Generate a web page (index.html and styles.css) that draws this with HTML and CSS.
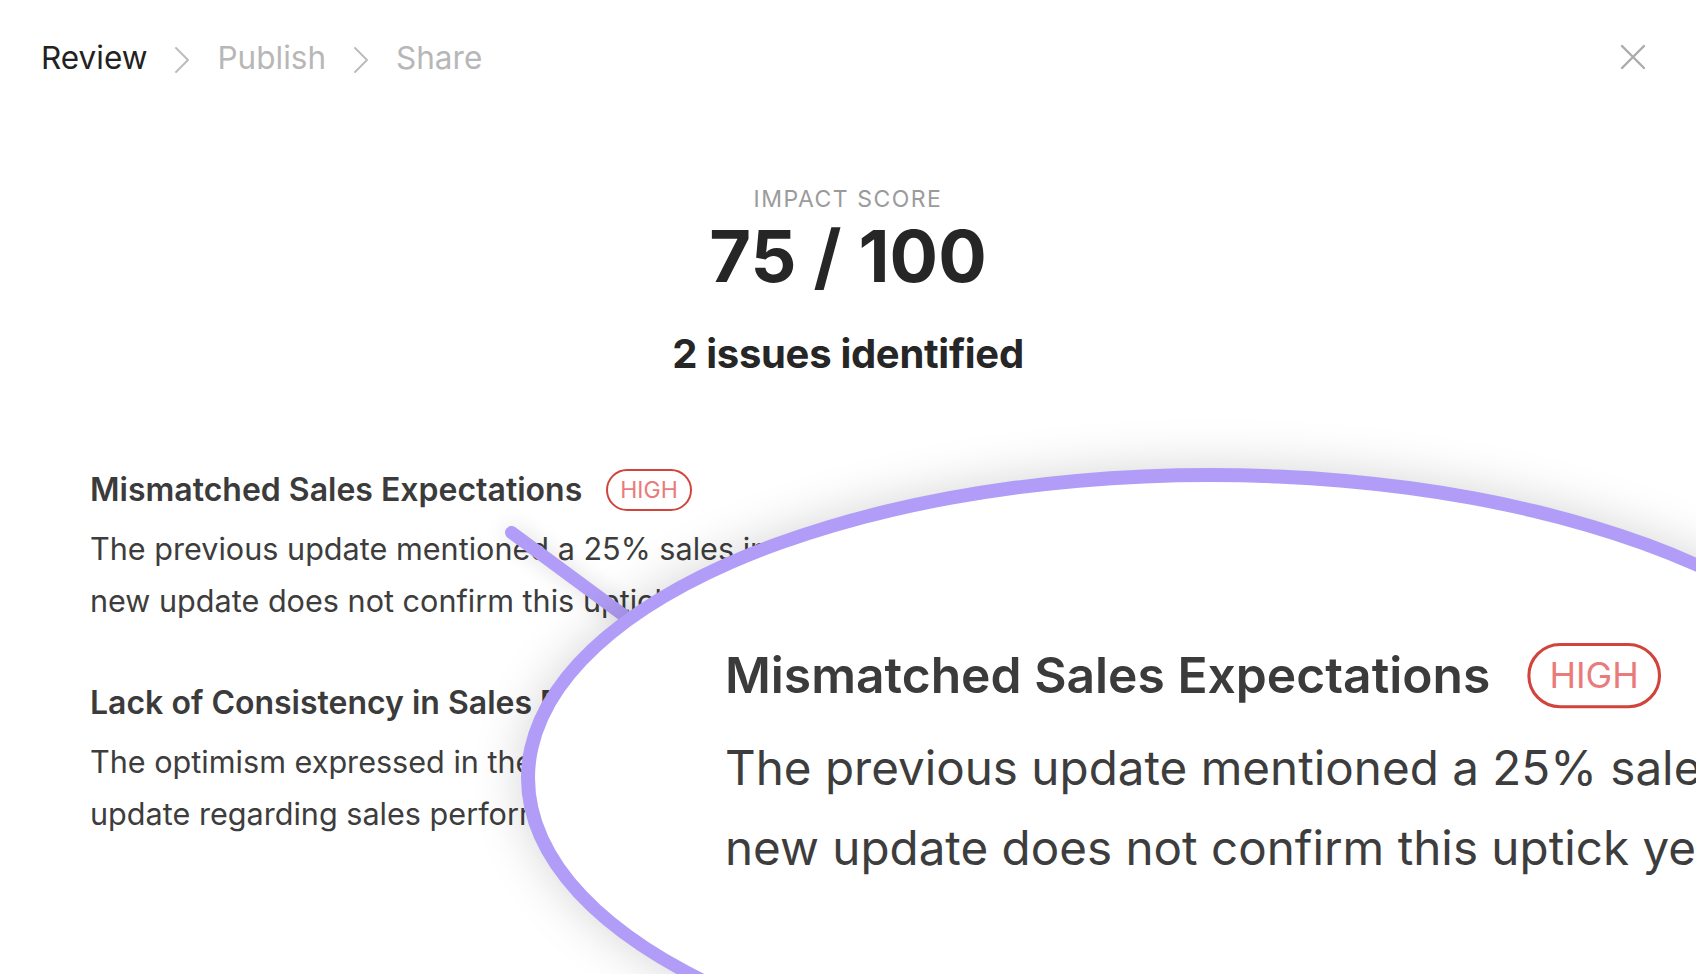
FILE: index.html
```html
<!DOCTYPE html>
<html lang="en">
<head>
    <meta charset="UTF-8">
    <title>Review</title>
    <link rel="stylesheet" href="styles.css">
</head>
<body>
    <div class="topbar">
        <div class="crumbs">
            <span class="crumb active">Review</span>
            <svg class="chev" width="16" height="28" viewBox="0 0 16 28"><polyline points="2,2 14,14 2,26" fill="none" stroke="#bcbcbc" stroke-width="2" stroke-linecap="round" stroke-linejoin="round"/></svg>
            <span class="crumb">Publish</span>
            <svg class="chev" width="16" height="28" viewBox="0 0 16 28"><polyline points="2,2 14,14 2,26" fill="none" stroke="#bcbcbc" stroke-width="2" stroke-linecap="round" stroke-linejoin="round"/></svg>
            <span class="crumb">Share</span>
        </div>
        <svg class="close" width="26" height="26" viewBox="0 0 26 26"><path d="M2 2L24 24M24 2L2 24" stroke="#ababab" stroke-width="2.4" stroke-linecap="round"/></svg>
    </div>

    <div class="score">
        <div class="score-label">IMPACT SCORE</div>
        <div class="score-value">75 / 100</div>
        <div class="issues-count">2 issues identified</div>
    </div>

    <div class="issues">
        <div class="issue">
            <div class="issue-title">Mismatched Sales Expectations <span class="badge">HIGH</span></div>
            <p>The previous update mentioned a 25% sales increase for this quarter, but the<br>new update does not confirm this uptick yet.</p>
        </div>
        <div class="issue">
            <div class="issue-title">Lack of Consistency in Sales Performance <span class="badge">HIGH</span></div>
            <p>The optimism expressed in the new update contrasts with the tone of the previous<br>update regarding sales performance in the last quarter.</p>
        </div>
    </div>

    <!-- magnifier -->
    <div class="handle"></div>
    <div class="lens">
        <div class="issues zoomed" aria-hidden="true">
            <div class="issue">
                <div class="issue-title">Mismatched Sales Expectations <span class="badge">HIGH</span></div>
                <p>The previous update mentioned a 25% sales increase for this quarter, but the<br>new update does not confirm this uptick yet.</p>
            </div>
            <div class="issue">
                <div class="issue-title">Lack of Consistency in Sales Performance <span class="badge">HIGH</span></div>
                <p>The optimism expressed in the new update contrasts with the tone of the previous<br>update regarding sales performance in the last quarter.</p>
            </div>
        </div>
    </div>
</body>
</html>
```

FILE: styles.css
```css
*{
    margin: 0;
    padding: 0;
    box-sizing: border-box;
}
body{
    overflow: hidden;
    background: #ffffff;
    font-family: Inter, "Noto Sans", sans-serif;
    color: #262626;
    width: 1696px;
    height: 974px;
    position: relative;
}
.topbar{
    display: flex;
    justify-content: space-between;
    align-items: center;
    height: 40px;
    margin-top: 38px;
    padding: 0 50px 0 41px;
}
.crumbs{
    display: flex;
    align-items: center;
    gap: 27px;
}
.crumb{
    font-size: 31.5px;
    line-height: 40px;
    color: #b7b7b7;
}
.crumb.active{
    color: #222222;
}
.chev{
    margin-top: 4px;
}
.close{
    margin-top: -2px;
}
.score{
    text-align: center;
    margin-top: 106px;
}
.score-label{
    font-size: 23px;
    line-height: 30px;
    letter-spacing: 1.5px;
    color: #9b9b9b;
}
.score-value{
    font-size: 72px;
    line-height: 80px;
    font-weight: 700;
    margin-top: 2px;
}
.issues-count{
    font-size: 40px;
    line-height: 50px;
    font-weight: 700;
    letter-spacing: -0.3px;
    margin-top: 33px;
}
.issues{
    padding: 0 90px;
    margin-top: 90px;
}
.issue-title{
    display: flex;
    align-items: center;
    gap: 24px;
    font-size: 32px;
    line-height: 40px;
    font-weight: 600;
    color: #3b3b3b;
    white-space: nowrap;
}
.badge{
    font-size: 23px;
    line-height: 38px;
    font-weight: 400;
    color: #ea7b7b;
    border: 2px solid #d1443b;
    border-radius: 21px;
    padding: 0 12px;
}
.issue p{
    font-size: 30.6px;
    line-height: 52px;
    margin-top: 12px;
    color: #3d3d3d;
    white-space: nowrap;
}
.issue + .issue{
    margin-top: 55px;
}

/* magnifier */
.lens{
    position: absolute;
    left: 521px;
    top: 468px;
    width: 1380px;
    height: 620px;
    border-radius: 50%;
    border: 14px solid #b19df7;
    background: #ffffff;
    overflow: hidden;
    box-shadow: 0 0 50px rgba(0, 0, 0, 0.17);
}
.lens .zoomed{
    position: absolute;
    top: 0;
    left: 0;
    width: 1696px;
    margin: 0;
    transform-origin: 0 0;
    transform: translate(50px, 161px) scale(1.555);
}
.handle{
    position: absolute;
    left: 505px;
    top: 526px;
    width: 170px;
    height: 13px;
    border-radius: 7px;
    background: #b19df7;
    transform-origin: 6.5px 6.5px;
    transform: rotate(36.4deg);
    box-shadow: 0 0 22px rgba(0, 0, 0, 0.14);
}
```
